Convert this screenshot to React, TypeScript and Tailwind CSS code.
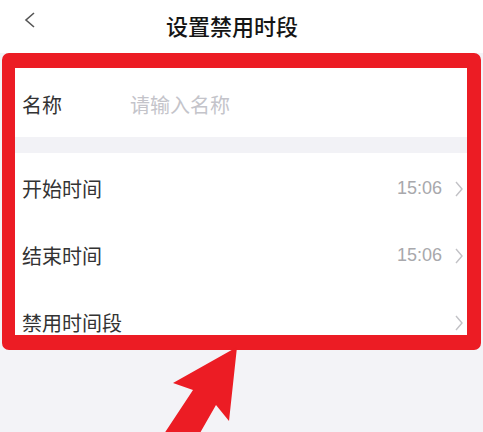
import React from 'react';

const cjk = { fontFamily: '"Noto Sans CJK SC", "Noto Sans", sans-serif' };

const Chevron: React.FC = () => (
  <svg width="10" height="18" viewBox="0 0 10 18" className="shrink-0">
    <path d="M2 2 L8 9 L2 16" fill="none" stroke="#c2c2c6" strokeWidth="1.4" />
  </svg>
);

const Row: React.FC<{ label: string; value?: string }> = ({ label, value }) => (
  <div className="flex h-[67px] items-center justify-between pl-[7px] pr-[3px] pt-1 bg-white">
    <span className="text-[20px] text-[#333333]" style={cjk}>
      {label}
    </span>
    <div className="flex items-center gap-[12px]">
      {value && (
        <span className="text-[18px] text-[#a8a8ac]" style={{ fontFamily: '"Liberation Sans", Arial, sans-serif' }}>
          {value}
        </span>
      )}
      <Chevron />
    </div>
  </div>
);

const App: React.FC = () => {
  return (
    <div className="relative w-[483px] h-[432px] overflow-hidden bg-[#f3f3f7]">
      {/* header */}
      <div className="relative flex h-[53px] items-start justify-center bg-white pt-[11px] pr-[19px]">
        <svg width="14" height="18" viewBox="0 0 14 18" className="absolute left-[23px] top-[11px]">
          <path d="M11 2 L3 9 L11 16" fill="none" stroke="#555555" strokeWidth="1.6" />
        </svg>
        <h1 className="text-[22px] font-medium text-[#151515] leading-[28px]" style={cjk}>
          设置禁用时段
        </h1>
      </div>

      {/* highlighted list */}
      <div className="mx-[2px] rounded-[7px] border-t-[15px] border-b-[15px] border-l-[13px] border-r-[14px] border-[#ec1c24]">
        <div className="h-[267px] overflow-hidden bg-[#f3f3f7]">
          <div className="flex h-[69px] items-center bg-white pl-[7px] pt-[5px]">
            <span className="w-[108px] text-[20px] text-[#333333]" style={cjk}>
              名称
            </span>
            <span className="text-[20px] text-[#c4c4ca]" style={cjk}>
              请输入名称
            </span>
          </div>
          <div className="h-[16px] bg-[#f2f2f6]" />
          <Row label="开始时间" value="15:06" />
          <Row label="结束时间" value="15:06" />
          <Row label="禁用时间段" />
        </div>
      </div>

      {/* arrow annotation */}
      <svg width="483" height="432" className="absolute left-0 top-0 pointer-events-none">
        <polygon
          points="237,347 229,421 216,405 196,440 160,440 193,390 173,383"
          fill="#ec1c24"
        />
      </svg>
    </div>
  );
};

export default App;
